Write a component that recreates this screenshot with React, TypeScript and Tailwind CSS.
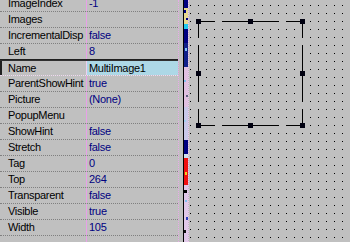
import React from "react";

const rows: [string, string][] = [
  ["ImageIndex", "-1"],
  ["Images", ""],
  ["IncrementalDisp", "false"],
  ["Left", "8"],
  ["Name", "MultiImage1"],
  ["ParentShowHint", "true"],
  ["Picture", "(None)"],
  ["PopupMenu", ""],
  ["ShowHint", "false"],
  ["Stretch", "false"],
  ["Tag", "0"],
  ["Top", "264"],
  ["Transparent", "false"],
  ["Visible", "true"],
  ["Width", "105"],
];

function Strip() {
  const segs: [number, number, string][] = [
    [0, 8, "#000080"],
    [8, 16, "#e8d890"],
    [24, 5, "#20c8f0"],
    [29, 14, "#000080"],
    [43, 24, "#10208a"],
    [67, 40, "#e0c0e0"],
    [107, 33, "#c8c8e8"],
    [140, 14, "#000080"],
    [154, 4, "#d0e0f0"],
    [158, 27, "#f01010"],
    [185, 57, "#e0c8e8"],
  ];
  const specks: [number, number, number, number, string][] = [
    [0, 10, 2, 3, "#000080"],
    [2, 18, 2, 2, "#000080"],
    [1, 48, 2, 3, "#80c0f0"],
    [0, 80, 2, 2, "#80c0f0"],
    [2, 95, 2, 2, "#606080"],
    [0, 120, 2, 2, "#a0d0f0"],
    [1, 172, 2, 3, "#f0d020"],
    [0, 190, 3, 3, "#000000"],
    [1, 200, 2, 2, "#80c0f0"],
    [2, 217, 2, 3, "#3040c0"],
    [0, 230, 2, 3, "#101010"],
  ];
  return (
    <svg width="4" height="242" className="block shrink-0">
      {segs.map(([y, h, c], i) => (
        <rect key={i} x={0} y={y} width={4} height={h} fill={c} />
      ))}
      {specks.map(([x, y, w, h, c], i) => (
        <rect key={"s" + i} x={x} y={y} width={w} height={h} fill={c} />
      ))}
    </svg>
  );
}

function Canvas() {
  const H = (cx: number, cy: number) => (
    <rect x={cx - 2 - 189} y={cy - 2} width={5} height={5} fill="#000010" />
  );
  const hl = (x1: number, x2: number, y: number) => (
    <rect x={x1 - 189} y={y} width={x2 - x1 + 1} height={1} fill="#000" />
  );
  const vl = (y1: number, y2: number, x: number) => (
    <rect x={x - 189} y={y1} width={1} height={y2 - y1 + 1} fill="#000" />
  );
  return (
    <svg width="161" height="242" className="block shrink-0">
      <defs>
        <pattern id="dots" x="1" y="5" width="8" height="8" patternUnits="userSpaceOnUse">
          <rect x="0" y="0" width="1" height="1" fill="#000" />
        </pattern>
      </defs>
      <rect x="0" y="0" width="161" height="242" fill="url(#dots)" />
      {[21, 125].map((y) => (
        <g key={y}>
          {hl(201, 214, y)}
          {hl(222, 247, y)}
          {hl(253, 278, y)}
          {hl(286, 299, y)}
        </g>
      ))}
      {[198, 302].map((x) => (
        <g key={x}>
          {vl(24, 36, x)}
          {vl(45, 70, x)}
          {vl(76, 101, x)}
          {vl(109, 122, x)}
        </g>
      ))}
      {H(198, 21)}
      {H(250, 21)}
      {H(302, 21)}
      {H(198, 73)}
      {H(302, 73)}
      {H(198, 125)}
      {H(250, 125)}
      {H(302, 125)}
    </svg>
  );
}

export default function App() {
  return (
    <div
      className="flex h-[242px] w-[350px] overflow-hidden bg-[#c0c0c0] text-[11px] tracking-[-0.3px]"
      style={{ fontFamily: '"Liberation Sans", Arial, sans-serif' }}
    >
      <div className="relative w-[179px] shrink-0 border-r border-dotted border-[#e8a8e8]">
        <div className="-mt-[4px] flex flex-col">
          {rows.map(([name, value], i) => {
            const sel = name === "Name";
            const before = i === 3;
            if (sel) {
              return (
                <div key={name} className="flex h-[16px] border-t border-b border-t-[#303030] border-b-[#f0d8f0] border-dotted [border-top-style:solid]">
                  <div className="flex w-[86px] shrink-0 items-center overflow-hidden whitespace-nowrap border-l-2 border-[#202020] pl-[6px] text-black">
                    {name}
                  </div>
                  <div className="flex flex-1 items-center overflow-hidden whitespace-nowrap border-l border-[#f0d0f0] bg-[#add8e6] pl-[2px] text-black">
                    {value}
                  </div>
                </div>
              );
            }
            return (
              <div
                key={name}
                className={
                  "flex h-[16px] border-b " +
                  (before ? "h-[15px] border-solid border-[#202020]" : "border-dotted border-[#808080]")
                }
              >
                <div className="flex w-[86px] shrink-0 items-center overflow-hidden whitespace-nowrap pl-[8px] text-black">
                  {name}
                </div>
                <div className="flex flex-1 items-center overflow-hidden whitespace-nowrap border-l border-[#e8a0e8] pl-[2px] text-[#000080]">
                  {value}
                </div>
              </div>
            );
          })}
          <div className="flex h-[20px]">
            <div className="w-[86px] shrink-0" />
            <div className="flex-1 border-l border-[#e8a0e8]" />
          </div>
        </div>
      </div>
      <div className="w-[4px] shrink-0" />
      <div className="w-[1px] shrink-0 bg-black" />
      <Strip />
      <div className="w-[1px] shrink-0 border-l border-dotted border-[#f0c0f0]" />
      <Canvas />
    </div>
  );
}
